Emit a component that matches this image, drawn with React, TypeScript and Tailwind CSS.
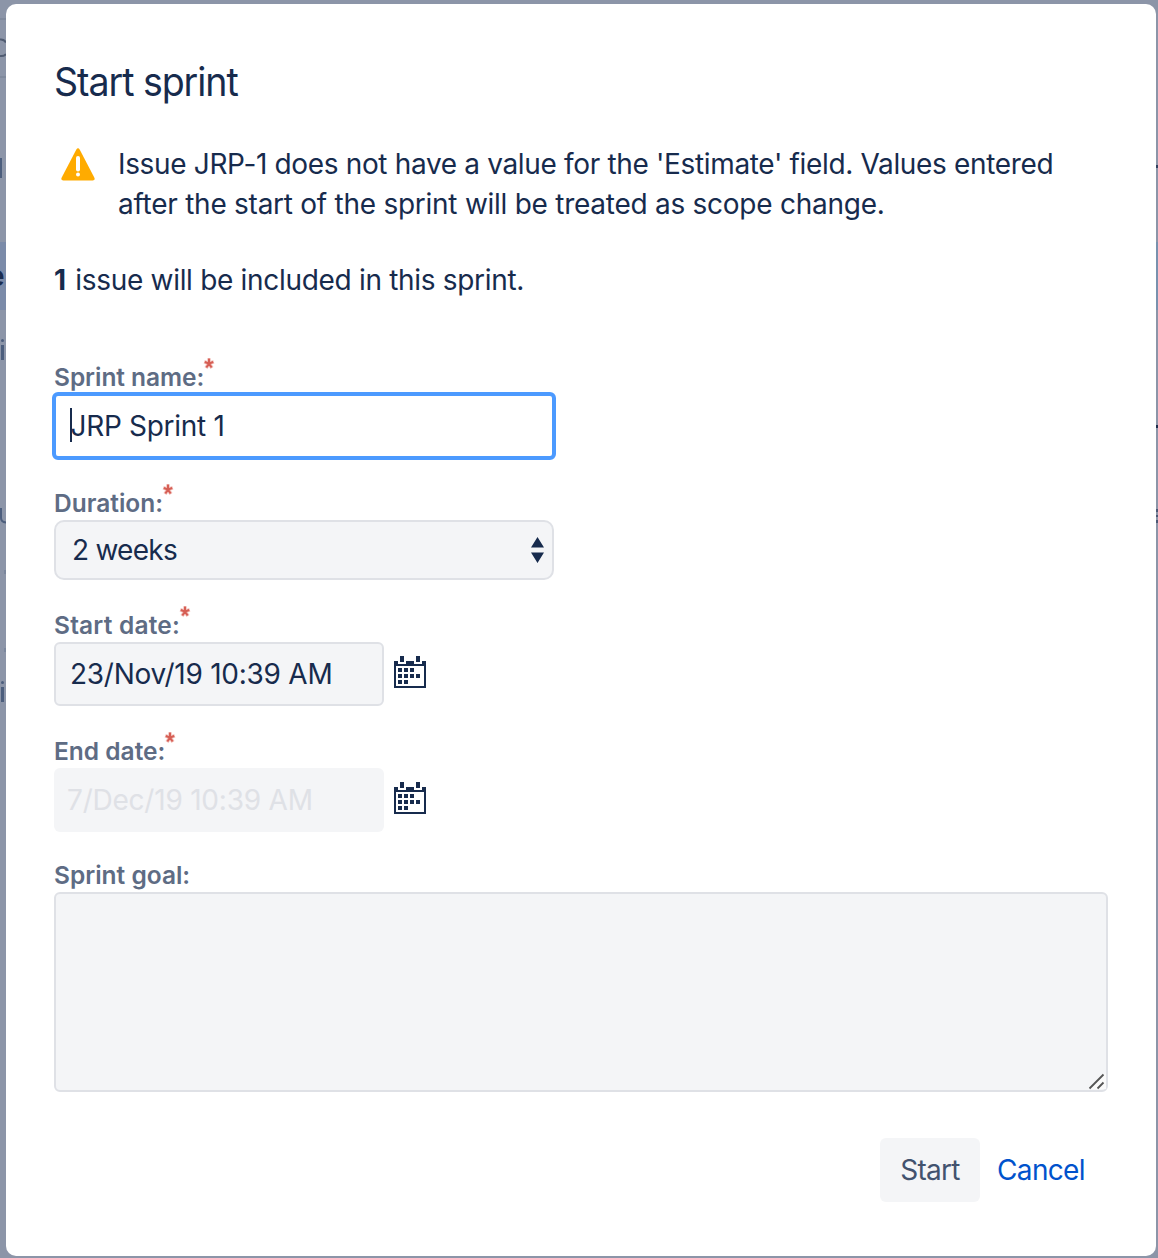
import type { ReactNode } from "react";

function Label({ children, required = true }: { children: ReactNode; required?: boolean }) {
  return (
    <div className="flex h-[30px] items-start text-[24.5px] leading-[30px] font-semibold text-[#5e6c84]">
      {children}
      {required && (
        <svg className="-mt-[5px] -ml-px shrink-0" width="12" height="13" viewBox="0 0 12 13" aria-label="required">
          <path d="M6 6.500V1.200M6 6.500 1.200 4.800M6 6.500 10.800 4.800M6 6.500 3 11M6 6.500 9 11" stroke="#f3c4bf" strokeWidth="3.600" fill="none" />
          <path d="M6 6.500V1.500M6 6.500 1.800 5M6 6.500 10.200 5M6 6.500 3.400 10.500M6 6.500 8.600 10.500" stroke="#d65f55" strokeWidth="2" fill="none" />
        </svg>
      )}
    </div>
  );
}

function CalendarIcon() {
  return (
    <svg className="mt-[14px] ml-[10px]" width="32" height="32" viewBox="0 0 32 32" fill="#172b4d" shapeRendering="crispEdges">
      <path d="M0 5h4v3h8V5h8v3h8V5h4v27H0zM2 10v20h28V10z" fillRule="evenodd" />
      <path d="M6 0h4v6H6zM22 0h4v6h-4z" />
      <path d="M4 12h4v4H4zM10 12h4v4h-4zM16 12h4v4h-4zM4 18h4v4H4zM10 18h4v4h-4zM16 18h4v4h-4zM22 18h4v4h-4zM4 24h4v4H4zM10 24h4v4h-4z" />
    </svg>
  );
}

function Backdrop() {
  return (
    <div className="absolute inset-0 overflow-hidden bg-[#8c95a8] text-[28px] leading-none text-[#4c5e7d]">
      <div className="absolute top-[18px] left-0 h-[2px] w-[6px] bg-[#808a9d]" />
      <div className="absolute top-[76px] left-0 h-[2px] w-[6px] bg-[#808a9d]" />
      <svg className="absolute top-[38px] left-0" width="6" height="20" viewBox="0 0 6 20">
        <path d="M0 1.500q4-.5 6 3M0 18q4 .5 6-2" fill="none" stroke="#505c72" strokeWidth="2" />
      </svg>
      <div className="absolute top-[158px] left-0 h-[20px] w-[2px] bg-[#4c5e7d]" />
      <div className="absolute top-[242px] left-0 h-[68px] w-[6px] bg-[#7b8ba9]" />
      <span className="absolute top-[262px] -left-[12px] font-semibold text-[#1b2d50]">e</span>
      <div className="absolute top-[339px] left-px h-[3px] w-[3px] rounded-full bg-[#4c5e7d]" />
      <div className="absolute top-[345px] left-px h-[15px] w-[3px] bg-[#4c5e7d]" />
      <svg className="absolute top-[508px] left-0" width="6" height="16" viewBox="0 0 6 16">
        <path d="M1 0v10q0 4 5 4.500" fill="none" stroke="#4c5e7d" strokeWidth="2" />
      </svg>
      <div className="absolute top-[570px] left-[4px] h-[4px] w-[2px] bg-[#7b879d]" />
      <div className="absolute top-[648px] left-[4px] h-[4px] w-[2px] bg-[#7b879d]" />
      <div className="absolute top-[681px] left-px h-[3px] w-[3px] rounded-full bg-[#4c5e7d]" />
      <div className="absolute top-[687px] left-px h-[15px] w-[3px] bg-[#4c5e7d]" />
      <div className="absolute top-[165px] right-0 h-[3px] w-[2px] bg-[#30405f]" />
      <div className="absolute top-[242px] right-0 h-[68px] w-[2px] bg-[#7891ae]" />
      <div className="absolute top-[425px] right-0 h-[3px] w-[2px] bg-[#1c2c4b]" />
      <div className="absolute top-[509px] right-0 h-[3px] w-[2px] bg-[#4b5875]" />
      <div className="absolute top-[515px] right-0 h-[2px] w-[2px] bg-[#4b5875]" />
      <div className="absolute top-[520px] right-0 h-[3px] w-[2px] bg-[#4b5875]" />
    </div>
  );
}

export default function App() {
  return (
    <div className="relative h-[1258px] w-[1158px] overflow-hidden pt-1 pr-0.5 pb-0.5 pl-1.5 font-['Inter',sans-serif] text-[#172b4d]">
      <Backdrop />
      <main className="relative flex h-full flex-col rounded-[10px] bg-white pr-12 pl-12 text-[28px] leading-10">
        <h1 className="mt-[54px] h-12 origin-left scale-x-[0.95] text-[39.5px] leading-[48px] font-[420] tracking-[-1.1px] whitespace-nowrap">
          Start sprint
        </h1>
        <div className="mt-[38px] flex h-20">
          <svg className="mt-[4px] ml-[7px] shrink-0" width="34" height="34" viewBox="0 0 34 34">
            <path d="M15.200 1.700q1.800-2.800 3.600 0L33.400 29.800q1 2.500-1.700 2.700H2.300Q-.4 32.300.6 29.800z" fill="#ffab00" />
            <rect x="15" y="8" width="4" height="15.500" rx="2" fill="#fff" />
            <circle cx="17" cy="26.500" r="2" fill="#fff" />
          </svg>
          <p className="ml-[23px] whitespace-nowrap">
            <span className="tracking-[-0.34px]">Issue JRP-1 does not have a value for the 'Estimate' field. Values entered</span>
            <br />
            <span className="tracking-[-0.26px]">after the start of the sprint will be treated as scope change.</span>
          </p>
        </div>
        <p className="mt-9 h-10 tracking-[-0.31px] whitespace-nowrap">
          <b className="mr-[2px] font-bold">1</b> issue will be included in this sprint.
        </p>

        <div className="mt-[62px]">
          <Label><span className="tracking-[-0.05px]">Sprint name:</span></Label>
          <div className="-ml-[2px] flex h-[68px] w-[504px] items-center rounded-[6px] border-4 border-[#4c9aff] pl-[14px]">
            <span className="-mt-[2px] h-[34px] w-[2px] bg-[#172b4d]" />
            <span className="-ml-[1.5px] tracking-[-0.3px]">JRP Sprint 1</span>
          </div>
        </div>
        <div className="mt-[28px]">
          <Label><span>Duration:</span></Label>
          <div className="mt-[2px] flex h-[60px] w-[500px] items-center justify-between rounded-[10px] border-2 border-[#dfe1e6] bg-[#f4f5f7] pr-[8px] pl-[16px]">
            <span className="tracking-[-0.75px]">2 weeks</span>
            <svg width="13" height="26" viewBox="0 0 13 26" fill="#172b4d">
              <path d="M6.500 0 13 10.500H0zM0 15.500h13L6.500 26z" />
            </svg>
          </div>
        </div>
        <div className="mt-[30px]">
          <Label><span className="tracking-[0.2px]">Start date:</span></Label>
          <div className="mt-[2px] flex">
            <div className="flex h-16 w-[330px] items-center rounded-[6px] border-2 border-[#dfe1e6] bg-[#f4f5f7] pl-[14px] whitespace-nowrap">
              <span className="tracking-[-0.25px]">23/Nov/19 10:39 AM</span>
            </div>
            <CalendarIcon />
          </div>
        </div>
        <div className="mt-[30px]">
          <Label><span>End date:</span></Label>
          <div className="mt-[2px] flex">
            <div className="flex h-16 w-[330px] items-center rounded-[6px] bg-[#f4f5f7] pl-[13px] whitespace-nowrap text-[#dfe1e6]">
              <span className="tracking-[-0.22px]">7/Dec/19 10:39 AM</span>
            </div>
            <CalendarIcon />
          </div>
        </div>
        <div className="mt-[28px]">
          <Label required={false}><span>Sprint goal:</span></Label>
          <div className="mt-[2px] flex h-[200px] w-[1054px] items-end justify-end rounded-[6px] border-2 border-[#dfe1e6] bg-[#f4f5f7]">
            <svg width="18" height="18" viewBox="0 0 18 18">
              <path d="M2 17 18 1v16z" fill="#fafafa" />
              <path d="M1.500 16.500 15.500 2.500M9.500 16.500l6-6" stroke="#555" strokeWidth="1.800" />
            </svg>
          </div>
        </div>
        <div className="mt-[46px] flex h-16 items-center pl-[826px]">
          <button className="h-16 w-[100px] shrink-0 rounded-[6px] bg-[#f4f5f7] tracking-[-0.7px] text-[#42526e]">Start</button>
          <a className="ml-[17px] tracking-[-0.65px] text-[#0052cc]">Cancel</a>
        </div>
      </main>
    </div>
  );
}
